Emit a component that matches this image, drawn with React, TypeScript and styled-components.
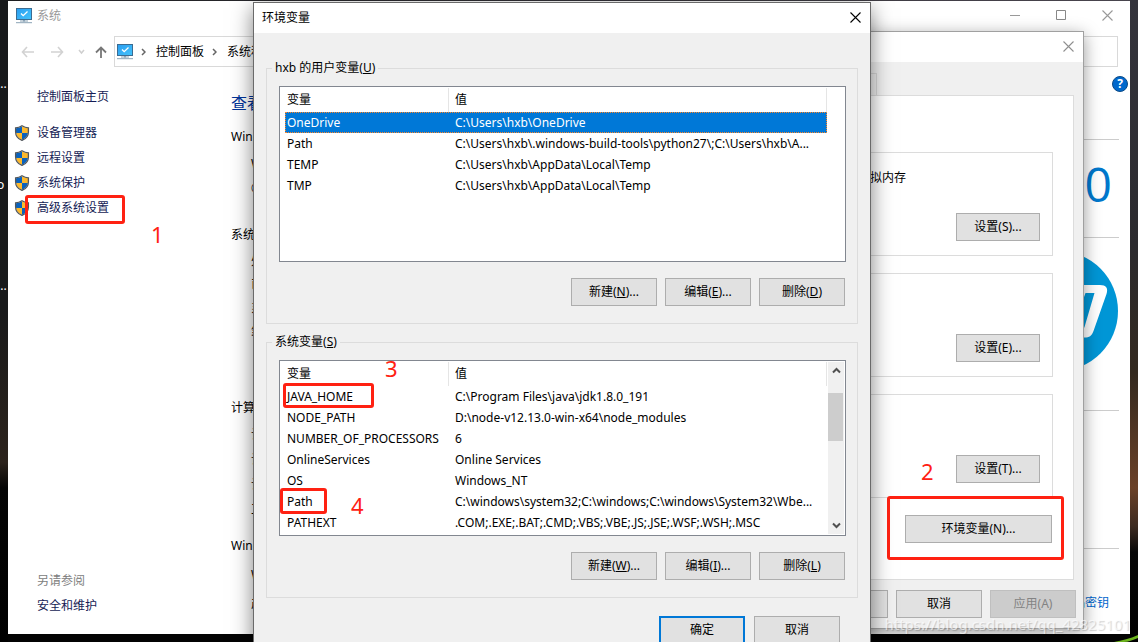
import React from "react";
import styled, { createGlobalStyle, css } from "styled-components";

const GlobalStyle = createGlobalStyle`
  *, *::before, *::after { box-sizing: border-box; }
  body {
    margin: 0;
    font-family: "Noto Sans", "Noto Sans CJK SC", sans-serif;
    font-size: 12px;
    line-height: 18px;
    color: #000;
    background: #000;
  }
  button, input { font: inherit; color: inherit; }
`;

/* ---------- desktop ---------- */

const Desktop = styled.div`
  position: relative;
  height: 100vh;
  overflow: hidden;
  background:
    linear-gradient(180deg, #17191b 0%, #191a1b 48%, #2c231c 72%, #050505 76%, #000 100%) left / 8px 100% no-repeat,
    linear-gradient(180deg, #34343c 0%, #2b2a2e 38%, #33291f 58%, #6b4128 76%, #3c2a20 82%, #070707 86%, #000 100%) right / 8px 100% no-repeat,
    linear-gradient(90deg, #1c1d20, #49454e) top / 100% 2px no-repeat,
    #030303;
`;

const IconLabel = styled.span<{ $top: number }>`
  position: absolute;
  left: -3px;
  top: ${(p) => p.$top}px;
  color: #fff;
`;

const GrassBlade = styled.svg`
  position: absolute;
  right: 0;
  bottom: 0;
`;

const Watermark = styled.div`
  position: absolute;
  right: 7px;
  bottom: 8px;
  font-size: 15px;
  line-height: 20px;
  color: rgba(255, 255, 255, 0.65);
  text-shadow: 1px 1px 1px rgba(0, 0, 0, 0.18);
  white-space: nowrap;
`;

/* ---------- shared parts ---------- */

const PushButton = styled.button<{ $width?: number; $primary?: boolean }>`
  width: ${(p) => p.$width ?? 86}px;
  height: 28px;
  padding: 0;
  flex: none;
  border: ${(p) => (p.$primary ? "2px solid #0078d7" : "1px solid #adadad")};
  background: #e1e1e1;
  white-space: nowrap;
  &:disabled {
    background: #ccc;
    border-color: #bfbfbf;
    color: #838383;
  }
`;

const GlyphButton = styled.button`
  display: flex;
  align-items: center;
  justify-content: center;
  flex: none;
  padding: 0;
  border: 0;
  background: none;
`;

const CloseButton = styled(GlyphButton)`
  align-self: flex-start;
  width: 30px;
  height: 28px;
`;

const frame = css`
  position: absolute;
  display: flex;
  flex-direction: column;
`;

const RedBox = styled.div<{ $x: number; $y: number; $w: number; $h: number }>`
  position: absolute;
  left: ${(p) => p.$x}px;
  top: ${(p) => p.$y}px;
  width: ${(p) => p.$w}px;
  height: ${(p) => p.$h}px;
  border: 3px solid #ff2112;
  border-radius: 3px;
  pointer-events: none;
`;

const RedNumber = styled.span<{ $x: number; $y: number }>`
  position: absolute;
  left: ${(p) => p.$x}px;
  top: ${(p) => p.$y}px;
  font-size: 22px;
  line-height: 24px;
  color: #ff2112;
`;

const Cross = ({ color }: { color: string }) => (
  <svg width="11" height="11" viewBox="0 0 11 11" stroke={color} strokeWidth="1.1">
    <path d="M.5.5l10 10M10.5.5l-10 10" />
  </svg>
);

const ComputerIcon = () => (
  <svg width="16" height="16" viewBox="0 0 16 16">
    <defs>
      <linearGradient id="screen" x1="0" y1="0" x2="1" y2="1">
        <stop offset="0" stopColor="#2a9df0" />
        <stop offset="1" stopColor="#43c3fb" />
      </linearGradient>
    </defs>
    <rect x="0.5" y="0.5" width="15" height="11" fill="url(#screen)" stroke="#3b6c92" />
    <path d="M5 5.500l2.200 2.200 4.300-4.200" fill="none" stroke="#fff" strokeWidth="1.3" />
    <path d="M7 12h2v1.500H7z" fill="#8ba4b8" />
    <path d="M4 13h8M0 14.700h16" stroke="#8aa3b5" strokeWidth="1" />
  </svg>
);

const ShieldIcon = () => (
  <svg width="16" height="16" viewBox="0 0 16 16">
    <defs>
      <clipPath id="shield">
        <path d="M8 1.200c1.600 1 3.600 1.900 6 2v3.600c0 3.800-2.400 6.600-6 8.200-3.600-1.600-6-4.400-6-8.200V3.200c2.400-.1 4.400-1 6-2z" />
      </clipPath>
    </defs>
    <g clipPath="url(#shield)">
      <path fill="#fdb92c" d="M8 0h8v8H8zM0 8h8v8H0z" />
      <path fill="#0a62bd" d="M0 0h8v8H0zM8 8h8v8H8z" />
    </g>
    <path
      d="M8 .8c1.600 1 3.800 2 6.400 2.100v4c0 3.900-2.600 6.900-6.400 8.500C4.200 13.800 1.600 10.800 1.600 6.900v-4C4.200 2.800 6.400 1.800 8 .8z"
      fill="none"
      stroke="#51575c"
      strokeWidth="1.3"
    />
  </svg>
);

/* ---------- system window ---------- */

const SystemFrame = styled.section`
  ${frame}
  inset: 1px 8px 8px 8px;
  background: #fff;
  overflow: hidden;
`;

const SystemTitle = styled.header`
  display: flex;
  align-items: center;
  height: 29px;
  padding-left: 8px;
  color: #999;
`;

const Caption = styled.span`
  flex: 1;
  margin-left: 5px;
`;

const CaptionButton = styled(GlyphButton)`
  width: 46px;
  height: 29px;
`;

const NavBar = styled.nav`
  display: flex;
  align-items: center;
  height: 43px;
  padding: 0 12px 0 4px;
`;

const NavButton = styled(GlyphButton)<{ $w: number }>`
  width: ${(p) => p.$w}px;
  height: 24px;
`;

const AddressBar = styled.div`
  display: flex;
  align-items: center;
  flex: 1;
  height: 31px;
  margin-left: 2px;
  padding-left: 2px;
  border: 1px solid #d9d9d9;
`;

const Crumb = styled.span`
  white-space: nowrap;
`;

const Separator = styled.svg`
  flex: none;
  margin: 0 10px 0 8px;
`;

const SearchBox = styled.input`
  width: 250px;
  height: 31px;
  margin-left: 8px;
  border: 1px solid #d9d9d9;
  background: #fff;
`;

const SystemBody = styled.div`
  display: flex;
  flex: 1;
  min-height: 0;
`;

const Sidebar = styled.aside`
  display: flex;
  flex-direction: column;
  width: 223px;
  flex: none;
  padding: 14px 0 16px 6px;
`;

const SideLink = styled.a`
  display: flex;
  align-items: center;
  gap: 7px;
  height: 25px;
  color: #151c55;
  text-decoration: none;
`;

const HomeLink = styled(SideLink)`
  height: 20px;
  margin-bottom: 13px;
  padding-left: 23px;
`;

const SeeAlso = styled.div`
  margin-top: auto;
  padding-left: 23px;
  line-height: 25px;
  color: #808080;
`;

const Main = styled.main`
  position: relative;
  flex: 1;
  min-width: 0;
  padding: 18px 11px 0 0;
`;

const PageTitle = styled.h1`
  margin: 0 0 10px;
  font-size: 16px;
  line-height: 24px;
  font-weight: 400;
  color: #039;
`;

const HelpButton = styled.button`
  position: absolute;
  right: 2px;
  top: 3px;
  width: 16px;
  height: 16px;
  padding: 0;
  border: 1px solid #0b4a86;
  border-radius: 50%;
  background: #0068cc;
  color: #fff;
  font-weight: 700;
  line-height: 14px;
`;

const InfoSection = styled.section<{ $height: number }>`
  height: ${(p) => p.$height}px;
`;

const InfoHeading = styled.h2`
  display: flex;
  align-items: center;
  gap: 8px;
  margin: 0 0 2px;
  font-size: 12px;
  line-height: 24px;
  font-weight: 400;
`;

const Rule = styled.hr`
  flex: 1;
  margin: 5px 0 0;
  border: 0;
  border-top: 1px solid #ccc;
`;

const InfoBody = styled.div`
  display: flex;
  justify-content: space-between;
  align-items: flex-start;
`;

const InfoRows = styled.div<{ $row: number }>`
  padding-left: 20px;
  line-height: ${(p) => p.$row}px;
  white-space: nowrap;
`;

const WindowsBrand = styled.div`
  padding: 3px 7px 0 0;
  font-family: "Open Sans", "Noto Sans", sans-serif;
  font-size: 48px;
  line-height: 60px;
  font-weight: 400;
  color: #0078cc;
`;

const MakerLogo = styled.svg`
  margin: 2px 1px 0 0;
`;

const KeyLink = styled.a`
  margin: 30px 10px 0 0;
  line-height: 25px;
  color: #06c;
  text-decoration: none;
`;

type Section = {
  title: string;
  height: number;
  row: number;
  lines: string[];
  aside?: React.ReactNode;
};

const sections: Section[] = [
  {
    title: "Windows 版本",
    height: 98,
    row: 25,
    lines: ["Windows 10 家庭中文版", "© 2019 Microsoft Corporation。保留所有权利。"],
    aside: <WindowsBrand>Windows 10</WindowsBrand>,
  },
  {
    title: "系统",
    height: 173,
    row: 24,
    lines: ["处理器:", "已安装的内存(RAM):", "系统类型:", "笔和触控:"],
    aside: (
      <MakerLogo width="120" height="120" viewBox="0 0 120 120">
        <circle cx="60" cy="60" r="60" fill="#0096d6" />
        <path d="M43 0L22 86h11l15-43h8L41 86h11l17-45c2-5-1-8-5-8H51L62 0z" fill="#fff" />
        <path
          fill="#fff"
          fillRule="evenodd"
          d="M71 34h31c6 0 8.500 3 6.500 9l-13 37c-2 5-4 6.500-9 6.500H68L56 120H45zM87.500 42L74 79h8q3.500 0 4.500-3L96.500 42z"
        />
      </MakerLogo>
    ),
  },
  {
    title: "计算机名、域和工作组设置",
    height: 138,
    row: 25,
    lines: ["计算机名:", "计算机全名:", "计算机描述:", "工作组:"],
  },
  {
    title: "Windows 激活",
    height: 90,
    row: 29,
    lines: ["Windows 已激活", "产品 ID:"],
    aside: <KeyLink href="#key">更改产品密钥</KeyLink>,
  },
];

const SystemWindow = () => (
  <SystemFrame>
    <SystemTitle>
      <ComputerIcon />
      <Caption>系统</Caption>
      <CaptionButton aria-label="最小化">
        <svg width="11" height="11" stroke="#999"><path d="M0 5.500h10" /></svg>
      </CaptionButton>
      <CaptionButton aria-label="最大化">
        <svg width="11" height="11" fill="none" stroke="#888"><path d="M.5.5h9v9h-9z" /></svg>
      </CaptionButton>
      <CaptionButton aria-label="关闭"><Cross color="#999" /></CaptionButton>
    </SystemTitle>
    <NavBar>
      <NavButton $w={30} aria-label="后退">
        <svg width="13" height="12" fill="none" stroke="#d2d2d2" strokeWidth="1.6"><path d="M6 1L1.500 6 6 11M1.500 6H13" /></svg>
      </NavButton>
      <NavButton $w={30} aria-label="前进">
        <svg width="13" height="12" fill="none" stroke="#d2d2d2" strokeWidth="1.6"><path d="M7 1l4.500 5L7 11M0 6h11.500" /></svg>
      </NavButton>
      <NavButton $w={18} aria-label="最近浏览的位置">
        <svg width="7" height="6" fill="none" stroke="#cfcfcf" strokeWidth="1.5"><path d="M1 1l2.500 3L6 1" /></svg>
      </NavButton>
      <NavButton $w={22} aria-label="上移">
        <svg width="12" height="12" fill="none" stroke="#777" strokeWidth="1.8"><path d="M1 6.500l5-5 5 5M6 1.500V12" /></svg>
      </NavButton>
      <AddressBar>
        <ComputerIcon />
        <Separator width="5" height="8" fill="none" stroke="#666" strokeWidth="1.5"><path d="M1 1l3 3-3 3" /></Separator>
        <Crumb>控制面板</Crumb>
        <Separator width="5" height="8" fill="none" stroke="#666" strokeWidth="1.5"><path d="M1 1l3 3-3 3" /></Separator>
        <Crumb>系统和安全</Crumb>
      </AddressBar>
      <SearchBox aria-label="搜索控制面板" />
    </NavBar>
    <SystemBody>
      <Sidebar>
        <HomeLink href="#home">控制面板主页</HomeLink>
        {["设备管理器", "远程设置", "系统保护", "高级系统设置"].map((label) => (
          <SideLink href="#task" key={label}>
            <ShieldIcon />
            {label}
          </SideLink>
        ))}
        <SeeAlso>
          另请参阅
          <SideLink href="#security">安全和维护</SideLink>
        </SeeAlso>
      </Sidebar>
      <Main>
        <HelpButton aria-label="帮助">?</HelpButton>
        <PageTitle>查看有关计算机的基本信息</PageTitle>
        {sections.map((s) => (
          <InfoSection key={s.title} $height={s.height}>
            <InfoHeading>
              {s.title}
              <Rule />
            </InfoHeading>
            <InfoBody>
              <InfoRows $row={s.row}>
                {s.lines.map((line) => (
                  <div key={line}>{line}</div>
                ))}
              </InfoRows>
              {s.aside}
            </InfoBody>
          </InfoSection>
        ))}
      </Main>
    </SystemBody>
    <RedBox $x={17} $y={194} $w={100} $h={29} />
    <RedNumber $x={143} $y={221}>1</RedNumber>
  </SystemFrame>
);

/* ---------- system properties dialog ---------- */

const PropertiesFrame = styled.section`
  ${frame}
  top: 31px;
  right: 54px;
  width: 470px;
  border: 1px solid #a0a0a0;
  background: #f0f0f0;
  box-shadow: 0 4px 16px rgba(0, 0, 0, 0.4);
`;

const DialogTitle = styled.header`
  display: flex;
  align-items: center;
  justify-content: space-between;
  height: 30px;
  padding-left: 8px;
  background: #fff;
`;

const TabStrip = styled.div`
  display: flex;
  height: 33px;
  padding: 11px 0 0 10px;
`;

const Tab = styled.button`
  width: 252px;
  border: 1px solid #d9d9d9;
  border-bottom: 0;
  background: #f0f0f0;
`;

const TabPane = styled.div`
  display: flex;
  flex-direction: column;
  margin: 0 9px;
  padding: 56px 20px 36px 12px;
  border: 1px solid #dcdcdc;
  background: #fff;
`;

const SettingsGroup = styled.div`
  display: flex;
  flex-direction: column;
  justify-content: space-between;
  align-items: flex-end;
  height: 104px;
  margin-bottom: 17px;
  padding: 16px 12px 14px 4px;
  border: 1px solid #dcdcdc;
`;

const GroupText = styled.p`
  align-self: flex-start;
  margin: 0;
`;

const EnvironmentRow = styled.div`
  display: flex;
  justify-content: flex-end;
  padding-right: 1px;
`;

const PropertiesFooter = styled.footer`
  display: flex;
  justify-content: flex-end;
  gap: 8px;
  padding: 10px 7px 10px;
`;

const PropertiesDialog = () => (
  <PropertiesFrame>
    <DialogTitle>
      <span />
      <CloseButton aria-label="关闭"><Cross color="#8f8f8f" /></CloseButton>
    </DialogTitle>
    <TabStrip><Tab aria-label="远程" /></TabStrip>
    <TabPane>
      <SettingsGroup>
        <GroupText>视觉效果，处理器计划，内存使用，以及虚拟内存</GroupText>
        <PushButton $width={84}>设置(S)...</PushButton>
      </SettingsGroup>
      <SettingsGroup>
        <span />
        <PushButton $width={84}>设置(E)...</PushButton>
      </SettingsGroup>
      <SettingsGroup>
        <span />
        <PushButton $width={84}>设置(T)...</PushButton>
      </SettingsGroup>
      <EnvironmentRow>
        <PushButton $width={147}>环境变量(N)...</PushButton>
      </EnvironmentRow>
    </TabPane>
    <PropertiesFooter>
      <PushButton aria-label="确定" />
      <PushButton>取消</PushButton>
      <PushButton disabled>应用(A)</PushButton>
    </PropertiesFooter>
    <RedBox $x={272} $y={464} $w={177} $h={64} />
    <RedNumber $x={306} $y={427}>2</RedNumber>
  </PropertiesFrame>
);

/* ---------- environment variables dialog ---------- */

const EnvironmentFrame = styled.section`
  ${frame}
  top: 2px;
  left: 253px;
  width: 618px;
  border: 1px solid #6a6a6a;
  background: #f0f0f0;
  box-shadow: 0 6px 20px rgba(0, 0, 0, 0.5);
`;

const EnvironmentBody = styled.div`
  display: flex;
  flex-direction: column;
  gap: 9px;
  padding: 26px 12px 20px;
`;

const VariableGroup = styled.fieldset`
  min-width: 0;
  margin: 0;
  padding: 0;
  border: 1px solid #dcdcdc;
`;

const GroupLegend = styled.legend`
  margin-left: 5px;
  padding: 0 3px;
`;

const GroupBody = styled.div`
  padding: 9px 11px 17px 12px;
`;

const ListBox = styled.div<{ $scroll: boolean }>`
  display: flex;
  gap: 1px;
  height: 176px;
  padding: 1px ${(p) => (p.$scroll ? 1 : 18)}px 1px 5px;
  border: 1px solid #828790;
  background: #fff;
  overflow: hidden;
`;

const VariableTable = styled.table`
  flex: 1;
  min-width: 0;
  align-self: flex-start;
  width: 100%;
  table-layout: fixed;
  border-collapse: separate;
  border-spacing: 0;
`;

const HeadCell = styled.th<{ $name?: boolean }>`
  width: ${(p) => (p.$name ? "164px" : "auto")};
  height: 24px;
  padding: 0 0 0 ${(p) => (p.$name ? 2 : 6)}px;
  border-right: 1px solid #e5e5e5;
  font-weight: 400;
  text-align: left;
`;

const VariableRow = styled.tr<{ $selected: boolean }>`
  height: 21px;
  ${(p) =>
    p.$selected &&
    css`
      background: #0078d7;
      color: #fff;
      outline: 1px dotted #ff8728;
      outline-offset: -1px;
    `}
`;

const Cell = styled.td<{ $name?: boolean }>`
  padding: 0 ${(p) => (p.$name ? 0 : 6)}px 0 ${(p) => (p.$name ? 2 : 6)}px;
  overflow: hidden;
  text-overflow: ellipsis;
  white-space: nowrap;
`;

const ScrollRail = styled.div`
  display: flex;
  flex-direction: column;
  width: 16px;
  flex: none;
  background: #f0f0f0;
`;

const ScrollArrow = styled(GlyphButton)`
  height: 17px;
`;

const ScrollTrack = styled.div`
  flex: 1;
  padding: 14px 1px 0 0;
`;

const ScrollThumb = styled.div`
  height: 48px;
  background: #cdcdcd;
`;

const ButtonRow = styled.div`
  display: flex;
  justify-content: flex-end;
  gap: 8px;
  padding: 16px 1px 0 0;
`;

const DialogFooter = styled.footer`
  display: flex;
  justify-content: flex-end;
  gap: 9px;
  padding: 9px 18px 0 0;
`;

type Variable = [name: string, value: string];

const userVariables: Variable[] = [
  ["OneDrive", "C:\\Users\\hxb\\OneDrive"],
  ["Path", "C:\\Users\\hxb\\.windows-build-tools\\python27\\;C:\\Users\\hxb\\A..."],
  ["TEMP", "C:\\Users\\hxb\\AppData\\Local\\Temp"],
  ["TMP", "C:\\Users\\hxb\\AppData\\Local\\Temp"],
];

const systemVariables: Variable[] = [
  ["JAVA_HOME", "C:\\Program Files\\java\\jdk1.8.0_191"],
  ["NODE_PATH", "D:\\node-v12.13.0-win-x64\\node_modules"],
  ["NUMBER_OF_PROCESSORS", "6"],
  ["OnlineServices", "Online Services"],
  ["OS", "Windows_NT"],
  ["Path", "C:\\windows\\system32;C:\\windows;C:\\windows\\System32\\Wbe..."],
  ["PATHEXT", ".COM;.EXE;.BAT;.CMD;.VBS;.VBE;.JS;.JSE;.WSF;.WSH;.MSC"],
];

type GroupProps = {
  legend: string;
  accessKey: string;
  rows: Variable[];
  selected?: string;
  scroll?: boolean;
  keys: [string, string, string];
};

const VariablePanel = ({ legend, accessKey, rows, selected, scroll = false, keys }: GroupProps) => (
  <VariableGroup>
    <GroupLegend>
      {legend}(<u>{accessKey}</u>)
    </GroupLegend>
    <GroupBody>
      <ListBox $scroll={scroll}>
        <VariableTable>
          <thead>
            <tr>
              <HeadCell $name>变量</HeadCell>
              <HeadCell>值</HeadCell>
            </tr>
          </thead>
          <tbody>
            {rows.map(([name, value]) => (
              <VariableRow key={name} $selected={name === selected}>
                <Cell $name>{name}</Cell>
                <Cell>{value}</Cell>
              </VariableRow>
            ))}
          </tbody>
        </VariableTable>
        {scroll && (
          <ScrollRail>
            <ScrollArrow aria-label="向上滚动">
              <svg width="9" height="7" fill="none" stroke="#505050" strokeWidth="2"><path d="M1 5.500L4.500 2 8 5.500" /></svg>
            </ScrollArrow>
            <ScrollTrack><ScrollThumb /></ScrollTrack>
            <ScrollArrow aria-label="向下滚动">
              <svg width="9" height="7" fill="none" stroke="#505050" strokeWidth="2"><path d="M1 1.500L4.500 5 8 1.500" /></svg>
            </ScrollArrow>
          </ScrollRail>
        )}
      </ListBox>
      <ButtonRow>
        <PushButton>新建(<u>{keys[0]}</u>)...</PushButton>
        <PushButton>编辑(<u>{keys[1]}</u>)...</PushButton>
        <PushButton>删除(<u>{keys[2]}</u>)</PushButton>
      </ButtonRow>
    </GroupBody>
  </VariableGroup>
);

const EnvironmentDialog = () => (
  <EnvironmentFrame>
    <DialogTitle>
      环境变量
      <CloseButton aria-label="关闭"><Cross color="#000" /></CloseButton>
    </DialogTitle>
    <EnvironmentBody>
      <VariablePanel
        legend="hxb 的用户变量"
        accessKey="U"
        rows={userVariables}
        selected="OneDrive"
        keys={["N", "E", "D"]}
      />
      <VariablePanel legend="系统变量" accessKey="S" rows={systemVariables} scroll keys={["W", "I", "L"]} />
      <DialogFooter>
        <PushButton $primary>确定</PushButton>
        <PushButton>取消</PushButton>
      </DialogFooter>
    </EnvironmentBody>
    <RedBox $x={29} $y={380} $w={91} $h={25} />
    <RedNumber $x={131} $y={353}>3</RedNumber>
    <RedBox $x={26} $y={485} $w={47} $h={26} />
    <RedNumber $x={97} $y={490}>4</RedNumber>
  </EnvironmentFrame>
);

export default function App() {
  return (
    <>
      <GlobalStyle />
      <Desktop>
        <IconLabel $top={75}>...</IconLabel>
        <IconLabel $top={176}>o</IconLabel>
        <IconLabel $top={277}>...</IconLabel>
        <GrassBlade width="24" height="7" viewBox="0 0 24 7">
          <path d="M0 7C8 5 16 4 24 0v3C19 5 14 7 10 7z" fill="#6db51e" />
        </GrassBlade>
        <SystemWindow />
        <PropertiesDialog />
        <EnvironmentDialog />
        <Watermark>https://blog.csdn.net/qq_42825101</Watermark>
      </Desktop>
    </>
  );
}
